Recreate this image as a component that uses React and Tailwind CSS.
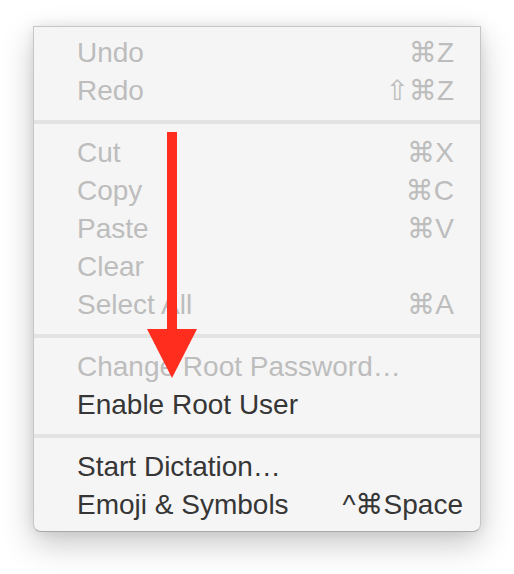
const sections = [
  [
    { label: "Undo", keys: "⌘Z", disabled: true },
    { label: "Redo", keys: "⇧⌘Z", disabled: true },
  ],
  [
    { label: "Cut", keys: "⌘X", disabled: true },
    { label: "Copy", keys: "⌘C", disabled: true },
    { label: "Paste", keys: "⌘V", disabled: true },
    { label: "Clear", disabled: true },
    { label: "Select All", keys: "⌘A", disabled: true },
  ],
  [
    { label: "Change Root Password…", disabled: true },
    { label: "Enable Root User" },
  ],
  [
    { label: "Start Dictation…" },
    { label: "Emoji & Symbols", keys: "^⌘Space", wide: true },
  ],
];

const MenuRow = ({ item }) => (
  <div
    className={`h-[38px] flex items-center justify-between pl-[43px] ${
      item.wide ? "pr-[17px]" : "pr-[26px]"
    } ${item.disabled ? "text-[#bdbdbd]" : "text-[#363636]"}`}
  >
    <span>{item.label}</span>
    {item.keys && <span>{item.keys}</span>}
  </div>
);

const App = () => {
  return (
    <div className="relative w-[514px] h-[574px] bg-white overflow-hidden">
      <div
        className="ml-[33px] pt-[26px]"
        style={{ fontFamily: '"Liberation Sans", Arial, "DejaVu Sans", sans-serif' }}
      >
        {/* Menu */}
        <div className="w-[448px] bg-[#f5f5f5] border border-[#c6c6c6] border-b-[#a9a9a9] rounded-b-[8px] pt-[7px] pb-[7px] text-[28px] leading-[38px] shadow-[0_12px_32px_rgba(0,0,0,0.22),0_0_12px_rgba(0,0,0,0.08)]">
          {sections.map((items, i) => (
            <div key={i}>
              {i > 0 && <div className="mt-[10px] mb-[10px] h-[4px] bg-[#e3e3e3]" />}
              {items.map((item) => (
                <MenuRow key={item.label} item={item} />
              ))}
            </div>
          ))}
        </div>
      </div>

      {/* Red annotation arrow */}
      <svg
        className="absolute left-0 top-0 pointer-events-none"
        width="514"
        height="574"
        viewBox="0 0 514 574"
      >
        <rect x="167" y="132" width="10" height="200" fill="#ff2d1e" />
        <polygon points="147,329 197,329 172,378" fill="#ff2d1e" />
      </svg>
    </div>
  );
};

export default App;
